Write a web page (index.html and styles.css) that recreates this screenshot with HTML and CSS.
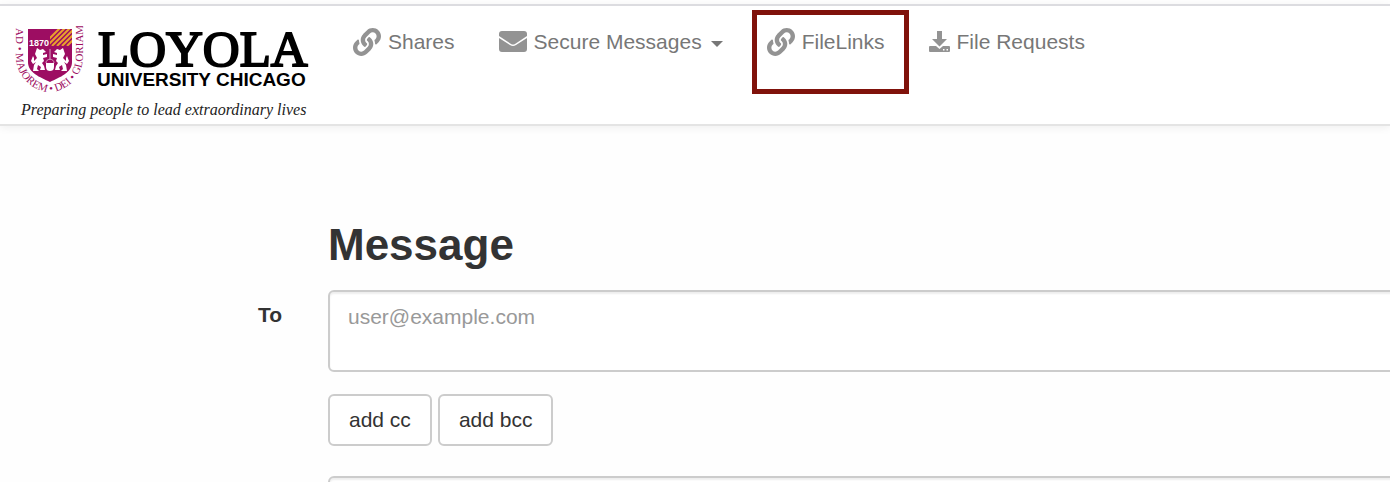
FILE: index.html
```
<!DOCTYPE html>
<html lang="en">
<head>
    <meta charset="UTF-8">
    <meta name="viewport" content="width=device-width, initial-scale=1.0">
    <title>Message - Loyola University Chicago</title>
    <link rel="stylesheet" href="styles.css">
</head>
<body>

    <svg class="symbols" aria-hidden="true">
        <symbol id="icon-link" viewBox="0 0 512 512">
            <path d="M326.612 185.391c59.747 59.809 58.927 155.698.36 214.59-.11.12-.24.25-.36.37l-67.2 67.2c-59.27 59.27-155.699 59.262-214.96 0-59.27-59.26-59.27-155.7 0-214.96l37.106-37.106c9.84-9.84 26.786-3.3 27.294 10.606.648 17.722 3.826 35.527 9.69 52.721 1.986 5.822.567 12.262-3.783 16.612l-13.087 13.087c-28.026 28.026-28.905 73.66-1.155 101.96 28.024 28.579 74.086 28.749 102.325.51l67.2-67.19c28.191-28.191 28.073-73.757 0-101.83-3.701-3.694-7.429-6.564-10.341-8.569a16.037 16.037 0 0 1-6.947-12.606c-.396-10.567 3.348-21.456 11.698-29.806l21.054-21.055c5.521-5.521 14.182-6.199 20.584-1.731a152.482 152.482 0 0 1 20.522 17.197zM467.547 44.449c-59.261-59.262-155.69-59.27-214.96 0l-67.2 67.2c-.12.12-.25.25-.36.37-58.566 58.892-59.387 154.781.36 214.59a152.454 152.454 0 0 0 20.521 17.196c6.402 4.468 15.064 3.789 20.584-1.731l21.054-21.055c8.35-8.35 12.094-19.239 11.698-29.806a16.037 16.037 0 0 0-6.947-12.606c-2.912-2.005-6.64-4.875-10.341-8.569-28.073-28.073-28.191-73.639 0-101.83l67.2-67.19c28.239-28.239 74.3-28.069 102.325.51 27.75 28.3 26.872 73.934-1.155 101.96l-13.087 13.087c-4.35 4.35-5.769 10.79-3.783 16.612 5.864 17.194 9.042 34.999 9.69 52.721.509 13.906 17.454 20.446 27.294 10.606l37.106-37.106c59.271-59.259 59.271-155.699.001-214.959z"/>
        </symbol>
    </svg>

    <header class="navbar">
        <a class="brand" href="#">
            <svg width="296" height="96" viewBox="14 26 296 96" role="img" aria-label="Loyola University Chicago">
                <defs>
                    <path id="motto" d="M16 28V56C16 79 36 92 50 92C64 92 83 79 83 56V20"/>
                    <clipPath id="corner"><path d="M50 29H72V46H50Z"/></clipPath>
                </defs>
                <!-- shield -->
                <path class="crimson" d="M28 29H72V62C72 73 60 77 50 82C40 77 28 73 28 62Z"/>
                <g clip-path="url(#corner)" class="stripes">
                    <path d="M42 46L60 28M47 46L65 28M52 46L70 28M57 46L75 28M62 46L80 28M67 46L85 28"/>
                </g>
                <text class="year" x="29" y="46">1870</text>
                <!-- wolves and kettle -->
                <g class="wolf">
                    <path id="wolf" d="M37 48L40 50L43 49L46 52L43 53L43 55L47 54L47 57L43 58L44 61L42 63L44 66L45 70H40L41 67L38 65L37 69L39 71H33L34 65L36 62L33 64L31 61L33 56L34 58L34 61L37 58L35 54Z"/>
                    <use href="#wolf" transform="matrix(-1 0 0 1 100 0)"/>
                    <path d="M46 63H54V67C54 70 52 71 50 71S46 70 46 67Z"/>
                </g>
                <path class="chain" d="M50 49V59M46 63C46 58 54 58 54 63"/>
                <text class="motto"><textPath href="#motto">AD • MAJOREM • DEI • GLORIAM</textPath></text>
                <text class="name" x="98" y="66">LOYOLA</text>
                <text class="campus" x="97" y="86">UNIVERSITY CHICAGO</text>
                <text class="tagline" x="21" y="115">Preparing people to lead extraordinary lives</text>
            </svg>
        </a>

        <nav class="menu">
            <a href="#"><svg class="icon" width="28" height="28"><use href="#icon-link"/></svg>Shares</a>
            <a href="#">
                <svg class="icon" width="28" height="22" viewBox="0 0 28 22">
                    <path d="M3 0H25Q28 0 28 3V5L16 13Q14 14 12 13L0 5V3Q0 0 3 0Z"/>
                    <path d="M0 7L11 14Q14 16 17 14L28 7V18Q28 21 25 21H3Q0 21 0 18Z"/>
                </svg>Secure Messages<span class="caret"></span>
            </a>
            <a href="#" class="marked"><svg class="icon" width="28" height="28"><use href="#icon-link"/></svg>FileLinks</a>
            <a href="#">
                <svg class="icon" width="21" height="22" viewBox="0 0 21 22">
                    <path d="M8 0H13V8H18L10.500 15.500L3 8H8Z"/>
                    <path fill-rule="evenodd" d="M1 15H7L10.500 18L14 15H20Q21 15 21 16V20Q21 21 20 21H1Q0 21 0 20V16Q0 15 1 15ZM14 18V19.500H15.500V18ZM17.500 18V19.500H19V18Z"/>
                </svg>File Requests
            </a>
        </nav>
    </header>

    <main>
        <form class="message-form">
            <h1>Message</h1>
            <label for="to">To</label>
            <textarea id="to" placeholder="user@example.com"></textarea>
            <div class="buttons">
                <button type="button">add cc</button>
                <button type="button">add bcc</button>
            </div>
            <input id="subject" type="text" aria-label="Subject">
        </form>
    </main>

</body>
</html>
```
FILE: styles.css
```
* {
    margin: 0;
    padding: 0;
    box-sizing: border-box;
}

body {
    background: #fefefe;
    color: #333;
    font-family: "Liberation Sans", Arial, sans-serif;
    font-size: 21px;
    line-height: 30px;
    height: 100vh;
    padding-top: 4px;
    overflow: hidden;
}

.symbols {
    display: none;
}

.navbar {
    display: flex;
    align-items: flex-start;
    gap: 43px;
    padding: 20px 14px 0;
    background: #fff;
    border-top: 2px solid #dcdce0;
    border-bottom: 2px solid #e4e4e4;
    box-shadow: 0 2px 8px rgba(0, 0, 0, 0.06);
}

.brand {
    display: flex;
    padding-bottom: 2px;
}

.crimson,
.motto {
    fill: #9d0d62;
}

.stripes {
    stroke: #e8a32c;
    stroke-width: 2px;
}

.wolf {
    fill: #fff;
}

.chain {
    fill: none;
    stroke: #d9a3c2;
    stroke-width: 1px;
}

.year {
    fill: #fff;
    font-size: 9px;
    font-weight: bold;
}

.motto {
    font-family: "Liberation Serif", serif;
    font-size: 11px;
}

.name {
    font-family: "Liberation Serif", serif;
    font-size: 51px;
    stroke: #000;
    stroke-width: 2px;
}

.campus {
    font-size: 19px;
    font-weight: bold;
}

.tagline {
    fill: #222;
    font-family: "Liberation Serif", serif;
    font-size: 16px;
    font-style: italic;
}

.menu {
    display: flex;
    gap: 44px;
    padding-top: 1px;
}

.menu a {
    position: relative;
    display: flex;
    align-items: center;
    color: #777;
    text-decoration: none;
    white-space: nowrap;
}

.icon {
    margin-right: 7px;
    fill: #939393;
}

.caret {
    margin: 4px 0 0 9px;
    border: 6px solid transparent;
    border-top-color: #777;
    border-bottom: 0;
}

.marked::after {
    content: "";
    position: absolute;
    inset: -17px -24px -37px -15px;
    border: 5px solid #80120b;
}

.message-form {
    display: grid;
    grid-template-columns: 282px 1fr;
    column-gap: 46px;
    width: calc(100% + 40px);
    padding-top: 94px;
}

.message-form h1,
.buttons,
#subject {
    grid-column: 2;
}

h1 {
    font-size: 44px;
    line-height: 50px;
    margin-bottom: 20px;
}

label {
    padding-top: 10px;
    font-weight: bold;
    text-align: right;
}

textarea,
input,
button {
    background: #fff;
    border: 2px solid #ccc;
    border-radius: 6px;
    color: #333;
    font: inherit;
}

textarea,
input {
    padding: 10px 18px;
    box-shadow: inset 0 2px 2px rgba(0, 0, 0, 0.07);
}

textarea {
    height: 82px;
    resize: none;
}

::placeholder {
    color: #999;
}

.buttons {
    display: flex;
    gap: 6px;
    margin: 22px 0 30px;
}

button {
    padding: 9px 19px;
}
```
